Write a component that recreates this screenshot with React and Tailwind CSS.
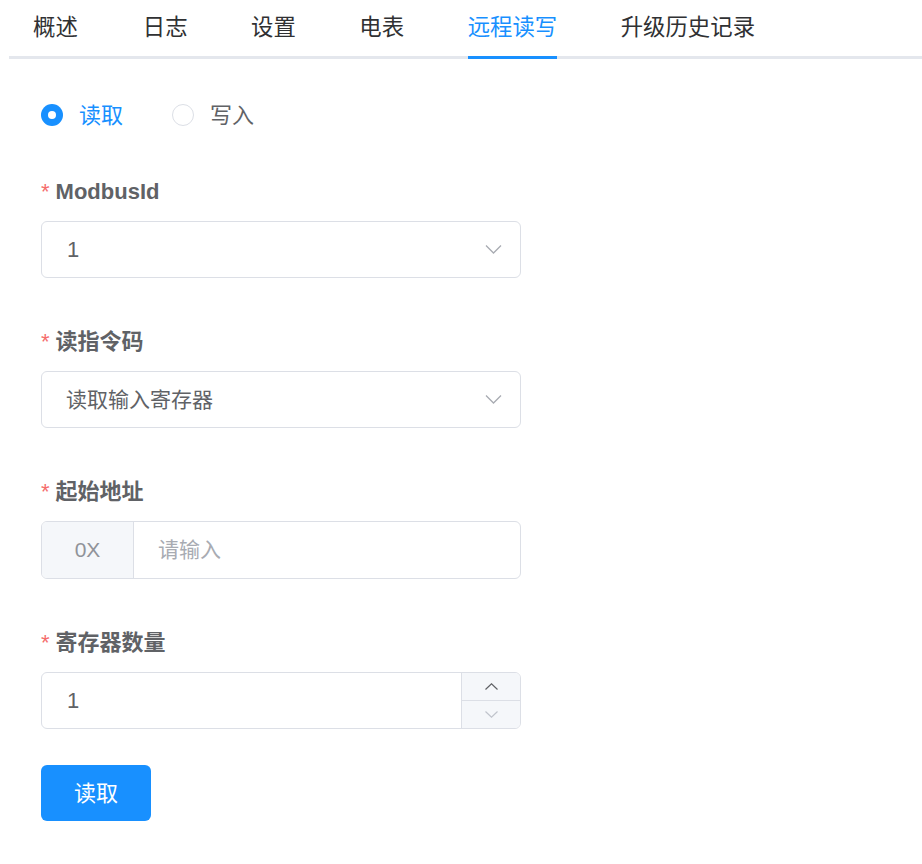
import React from "react";

const FONT = { fontFamily: '"Liberation Sans", "Noto Sans CJK SC", sans-serif' };

function Chevron({ up = false, className = "" }) {
  return (
    <svg width="17" height="9" viewBox="0 0 17 9" className={className} fill="none">
      <path
        d={up ? "M1 8.5 L8.5 1 L16 8.5" : "M1 0.5 L8.5 8 L16 0.5"}
        stroke="currentColor"
        strokeWidth="1.3"
      />
    </svg>
  );
}

function Label({ children }) {
  return (
    <div className="h-[35px] mb-[12px] flex items-center text-[22px] font-bold text-[#606266]">
      <span className="text-[#f56c6c] mr-[6px] font-normal">*</span>
      {children}
    </div>
  );
}

export default function App() {
  const tabs = ["概述", "日志", "设置", "电表", "远程读写", "升级历史记录"];
  return (
    <div className="w-[922px] h-[864px] bg-white" style={FONT}>
      <div className="ml-[9px] border-b-[3px] border-[#e4e7ed] flex h-[59px]">
        {tabs.map((t, i) => {
          const active = t === "远程读写";
          return (
            <div
              key={t}
              className={`relative h-[56px] flex items-center text-[22.4px] ${
                i === 0 ? "pl-[24px] pr-[33px]" : "pl-[32px] pr-[31.5px]"
              } ${active ? "text-[#1890ff]" : "text-[#303133]"}`}
            >
              <span>{t}</span>
              {active && (
                <span className="absolute left-[32px] right-[31.5px] bottom-[-3px] h-[3px] bg-[#1890ff]" />
              )}
            </div>
          );
        })}
      </div>

      <div className="pl-[41px] pt-[41px]">
        <div className="flex items-center h-[30px] text-[22px]">
          <div className="flex items-center">
            <span className="w-[22px] h-[22px] rounded-full bg-[#1890ff] flex items-center justify-center">
              <span className="w-[8px] h-[8px] rounded-full bg-white" />
            </span>
            <span className="ml-[16px] text-[#1890ff]">读取</span>
          </div>
          <div className="flex items-center ml-[49px]">
            <span className="w-[22px] h-[22px] rounded-full border border-[#dcdfe6] bg-white" />
            <span className="ml-[16px] text-[#606266]">写入</span>
          </div>
        </div>

        <div className="mt-[44px] w-[480px]">
          <Label>ModbusId</Label>
          <div className="h-[57px] border border-[#dcdfe6] rounded-[6px] flex items-center pl-[25px] pr-[18px] text-[22px] text-[#606266]">
            <span className="flex-1">1</span>
            <Chevron className="text-[#a8abb2]" />
          </div>

          <div className="mt-[46px]">
            <Label>读指令码</Label>
            <div className="h-[57px] border border-[#dcdfe6] rounded-[6px] flex items-center pl-[24px] pr-[18px] text-[21px] text-[#606266]">
              <span className="flex-1">读取输入寄存器</span>
              <Chevron className="text-[#a8abb2]" />
            </div>
          </div>

          <div className="mt-[46px]">
            <Label>起始地址</Label>
            <div className="h-[58px] border border-[#dcdfe6] rounded-[6px] flex overflow-hidden text-[21px]">
              <div className="w-[92px] bg-[#f5f7fa] border-r border-[#dcdfe6] flex items-center justify-center text-[#909399]">
                0X
              </div>
              <div className="flex-1 flex items-center pl-[24px] text-[#a8abb2]">请输入</div>
            </div>
          </div>

          <div className="mt-[46px]">
            <Label>寄存器数量</Label>
            <div className="h-[57px] border border-[#dcdfe6] rounded-[6px] flex overflow-hidden">
              <div className="flex-1 flex items-center pl-[25px] text-[22px] text-[#606266]">1</div>
              <div className="w-[59px] bg-[#f5f7fa] border-l border-[#dcdfe6] flex flex-col">
                <div className="flex-1 flex items-center justify-center border-b border-[#dcdfe6] text-[#606266]">
                  <svg width="13" height="7" viewBox="0 0 13 7" fill="none">
                    <path d="M0.5 6.5 L6.5 0.8 L12.5 6.5" stroke="currentColor" strokeWidth="1.2" />
                  </svg>
                </div>
                <div className="flex-1 flex items-center justify-center text-[#c0c4cc]">
                  <svg width="13" height="7" viewBox="0 0 13 7" fill="none">
                    <path d="M0.5 0.5 L6.5 6.2 L12.5 0.5" stroke="currentColor" strokeWidth="1.2" />
                  </svg>
                </div>
              </div>
            </div>
          </div>

          <div className="mt-[36px]">
            <button className="w-[110px] h-[56px] rounded-[6px] bg-[#1890ff] text-white text-[22px] flex items-center justify-center">
              读取
            </button>
          </div>
        </div>
      </div>
    </div>
  );
}
